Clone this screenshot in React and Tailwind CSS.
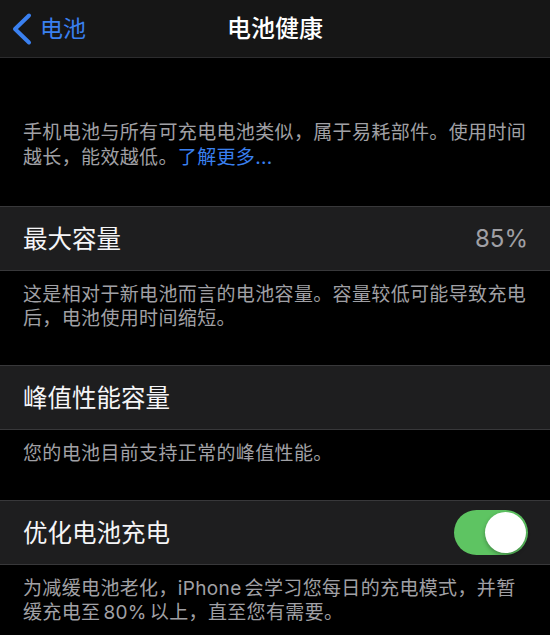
import React from 'react';

const ROW_TEXT = 'text-[24.5px] leading-[32px] text-[#f5f5f7]';
const NOTE_TEXT = 'text-[19px] leading-[24px] tracking-[0.35px] text-[#a0a0a5]';

const Row = ({ title, children }) => (
  <div className="flex h-[65px] items-center justify-between border-y border-[#38383a] bg-[#1e1e1f] pl-[23px] pr-[22px]">
    <span className={ROW_TEXT}>{title}</span>
    {children}
  </div>
);

const Note = ({ children }) => (
  <p className={`px-[23px] pt-3 pb-[34px] ${NOTE_TEXT}`}>{children}</p>
);

const Toggle = ({ on = true }) => (
  <div
    className={`flex h-[45px] w-[74px] items-center rounded-full p-[2px] ${
      on ? 'justify-end bg-[#5ec462]' : 'justify-start bg-[#39393d]'
    }`}
  >
    <div className="h-[41px] w-[41px] rounded-full bg-white shadow-[0_2px_4px_rgba(0,0,0,0.3)]" />
  </div>
);

export default function App() {
  return (
    <div className="min-h-[635px] w-[550px] overflow-hidden bg-black font-[family-name:Inter,'Noto_Sans_CJK_SC',sans-serif]">
      {/* Nav bar */}
      <div className="grid h-[58px] grid-cols-[1fr_auto_1fr] items-center border-b border-[#2c2c2e] bg-[#161616]">
        <div className="flex items-center gap-[7px] pl-[11px] text-[#3a80f0]">
          <svg width="22" height="34" viewBox="0 0 22 34" fill="none">
            <path
              d="M18 3.5 L4 17 L18 30.5"
              stroke="currentColor"
              strokeWidth="4"
              strokeLinecap="round"
              strokeLinejoin="round"
            />
          </svg>
          <span className="text-[23px] leading-[30px]">电池</span>
        </div>
        <h1 className="text-[24px] font-medium leading-[30px] text-white">电池健康</h1>
        <div />
      </div>

      {/* Intro */}
      <p className="px-[23px] pt-[62px] pb-[36px] text-[19px] leading-[25px] tracking-[0.35px] text-[#a0a0a5]">
        手机电池与所有可充电电池类似，属于易耗部件。使用时间
        <br />
        越长，能效越低。<span className="text-[#3a80f0]">了解更多...</span>
      </p>

      <Row title="最大容量">
        <span className="text-[24px] leading-[32px] text-[#a0a0a5]">85%</span>
      </Row>
      <Note>
        这是相对于新电池而言的电池容量。容量较低可能导致充电
        <br />
        后，电池使用时间缩短。
      </Note>

      <Row title="峰值性能容量" />
      <Note>您的电池目前支持正常的峰值性能。</Note>

      <Row title="优化电池充电">
        <Toggle on />
      </Row>
      <p className={`px-[23px] pt-3 ${NOTE_TEXT}`}>
        为减缓电池老化，<span className="mr-[3px]">iPhone</span>会学习您每日的充电模式，并暂
        <br />
        缓充电至<span className="mx-[3px]">80%</span>以上，直至您有需要。
      </p>
    </div>
  );
}
